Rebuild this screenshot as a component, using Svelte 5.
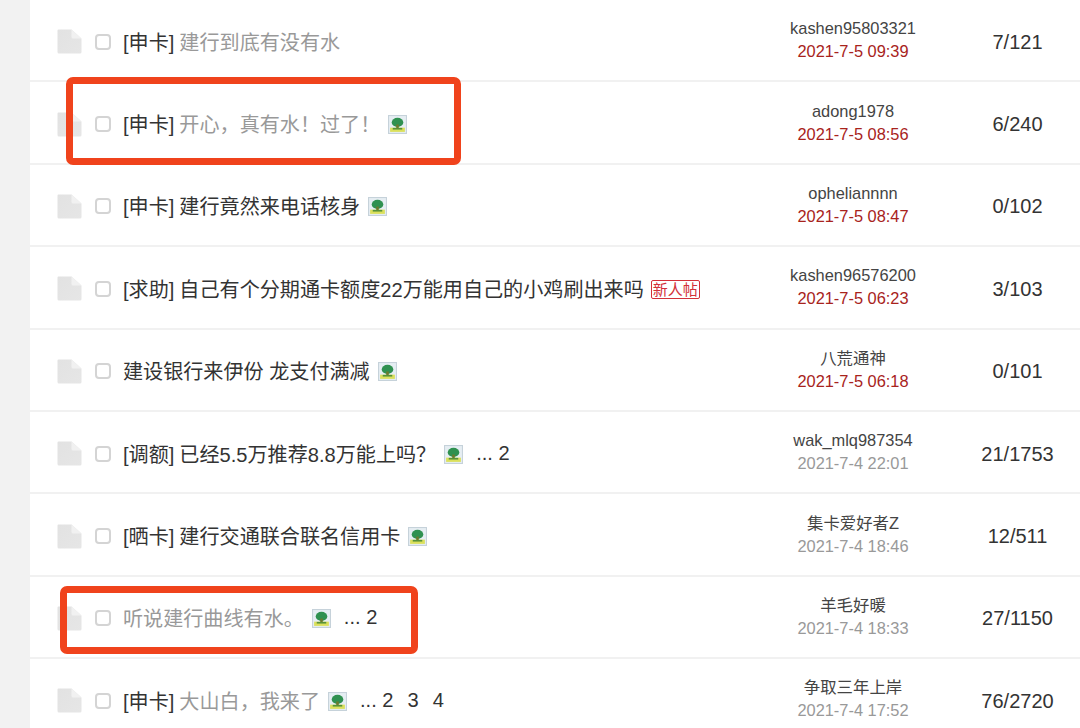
<script lang="ts">
    const rows = [
        { tag: '[申卡]', title: '建行到底有没有水', dim: true, author: 'kashen95803321', date: '2021-7-5 09:39', hot: true, count: '7/121' },
        { tag: '[申卡]', title: '开心，真有水！过了！', dim: true, pic: true, author: 'adong1978', date: '2021-7-5 08:56', hot: true, count: '6/240' },
        { tag: '[申卡]', title: '建行竟然来电话核身', pic: true, author: 'opheliannnn', date: '2021-7-5 08:47', hot: true, count: '0/102' },
        { tag: '[求助]', title: '自己有个分期通卡额度22万能用自己的小鸡刷出来吗', isNew: true, author: 'kashen96576200', date: '2021-7-5 06:23', hot: true, count: '3/103' },
        { title: '建设银行来伊份 龙支付满减', pic: true, author: '八荒通神', date: '2021-7-5 06:18', hot: true, count: '0/101' },
        { tag: '[调额]', title: '已经5.5万推荐8.8万能上吗？', pic: true, pages: [2], author: 'wak_mlq987354', date: '2021-7-4 22:01', count: '21/1753' },
        { tag: '[晒卡]', title: '建行交通联合联名信用卡', pic: true, author: '集卡爱好者Z', date: '2021-7-4 18:46', count: '12/511' },
        { title: '听说建行曲线有水。', dim: true, pic: true, pages: [2], author: '羊毛好暖', date: '2021-7-4 18:33', count: '27/1150' },
        { tag: '[申卡]', title: '大山白，我来了', dim: true, pic: true, pages: [2, 3, 4], author: '争取三年上岸', date: '2021-7-4 17:52', count: '76/2720' }
    ];
</script>

<div class="page">
    <div class="list">
        {#each rows as row}
            <div class="row">
                <svg class="doc" viewBox="0 0 25 25" aria-hidden="true">
                    <defs>
                        <linearGradient id="docFill" x1="0" y1="0" x2="1" y2="1">
                            <stop offset="0" stop-color="#e2e2e2" />
                            <stop offset="1" stop-color="#e6e6e6" />
                        </linearGradient>
                    </defs>
                    <path d="M.5 1.5 A1 1 0 0 1 1.5 .5 H14.5 L24.5 9.5 V23 A1.5 1.5 0 0 1 23 24.5 H2 A1.5 1.5 0 0 1 .5 23 Z" fill="url(#docFill)" />
                    <path d="M14.5 .5 V8 Q14.5 9.5 16 9.5 H24.5 Z" fill="#f1f1f1" />
                </svg>
                <span class="check"></span>
                <div class="title">
                    {#if row.tag}<span class="tag">{row.tag}</span>{/if}
                    <span class:dim={row.dim}>{row.title}</span>
                    {#if row.pic}
                        <svg class="pic" viewBox="0 0 18 18" aria-hidden="true">
                            <rect x=".5" y=".5" width="17" height="17" fill="#e6eef3" stroke="#c6d2da" />
                            <rect x="2" y="12" width="14" height="4" fill="#dbe05c" />
                            <ellipse cx="9" cy="7" rx="5.5" ry="4.3" fill="#2f9150" />
                            <rect x="7.8" y="9" width="2.4" height="4" fill="#6f7a2c" />
                            <rect x="4.5" y="12.2" width="9" height="1.6" fill="#58913a" />
                        </svg>
                    {/if}
                    {#if row.isNew}<span class="new">新人帖</span>{/if}
                    {#if row.pages}
                        <span class="pages">... {#each row.pages as p}<span class="pg">{p}</span>{/each}</span>
                    {/if}
                </div>
                <div class="author">
                    <div class="name">{row.author}</div>
                    <div class="date" class:hot={row.hot}>{row.date}</div>
                </div>
                <div class="count">{row.count}</div>
            </div>
        {/each}
    </div>
    <div class="mark mark-a"></div>
    <div class="mark mark-b"></div>
</div>

<style>
    :global(body) {
        margin: 0;
        background: #f2f2f2;
    }

    .page {
        position: relative;
        width: 1080px;
        height: 728px;
        overflow: hidden;
        background: #f2f2f2;
        padding-left: 30px;
        box-sizing: border-box;
        font-family: "Liberation Sans", "Noto Sans CJK SC", sans-serif;
        color: #333;
    }

    .list {
        background: #fff;
    }

    .row {
        display: flex;
        align-items: center;
        height: 82.4px;
        box-sizing: border-box;
        border-bottom: 2px solid #f1f1f1;
        padding-left: 27px;
    }

    .doc {
        width: 25px;
        height: 25px;
        flex: none;
        margin-top: 3px;
    }

    .check {
        width: 16px;
        height: 16px;
        box-sizing: border-box;
        flex: none;
        margin-left: 13px;
        margin-top: 3px;
        border: 2px solid #d4d4d4;
        border-radius: 4px;
        background: #fff;
    }

    .title {
        flex: 1;
        display: flex;
        align-items: center;
        margin-left: 12px;
        margin-top: 2px;
        font-size: 20.1px;
        white-space: pre;
        color: #333;
    }

    .tag {
        margin-right: 5px;
    }

    .dim {
        color: #999;
    }

    .pic {
        width: 19px;
        height: 19px;
        flex: none;
        margin-left: 8px;
        margin-top: 2px;
        filter: blur(0.4px);
    }

    .new {
        margin-left: 7px;
        margin-top: 2px;
        padding: 0 1px;
        border: 1.5px solid #d3303a;
        border-radius: 2px;
        color: #d3303a;
        font-size: 15px;
        line-height: 17px;
    }

    .pages {
        margin-left: 13px;
    }

    .pg {
        margin-right: 14px;
    }

    .author {
        width: 200px;
        flex: none;
        text-align: center;
        font-size: 16.4px;
        line-height: 23px;
        margin-right: 2px;
    }

    .name {
        color: #444;
    }

    .date {
        color: #999;
    }

    .date.hot {
        color: #a8231c;
    }

    .count {
        width: 125px;
        flex: none;
        margin-top: 4px;
        text-align: center;
        font-size: 20px;
    }

    .mark {
        position: absolute;
        box-sizing: border-box;
        border: 7px solid #f0431c;
        border-radius: 7px;
    }

    .mark-a {
        left: 66px;
        top: 77px;
        width: 395px;
        height: 88px;
    }

    .mark-b {
        left: 60px;
        top: 586px;
        width: 358px;
        height: 68px;
    }
</style>
